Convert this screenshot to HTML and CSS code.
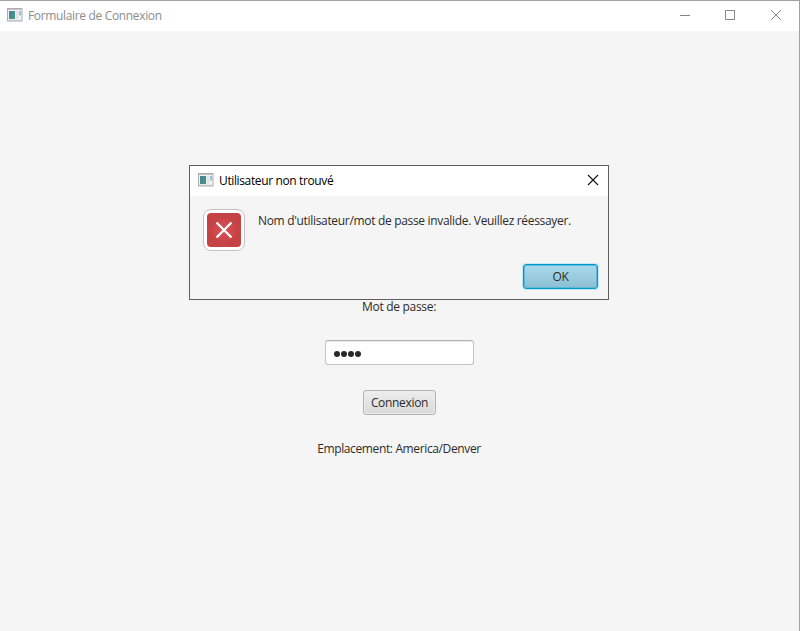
FILE: index.html
```html
<!DOCTYPE html>
<html lang="fr">
<head>
<meta charset="utf-8">
<title>Formulaire de Connexion</title>
<link rel="stylesheet" href="styles.css">
</head>
<body>
<svg width="0" height="0" class="defs">
  <defs>
    <linearGradient id="screen" x1="0" y1="0" x2="1" y2="1">
      <stop offset="0" stop-color="#4a7c9c"/><stop offset="1" stop-color="#3fa07c"/>
    </linearGradient>
    <symbol id="app" viewBox="0 0 16 14">
      <rect x=".5" y=".5" width="14.5" height="12.5" fill="#f5f4f7" stroke="#aeabb2"/>
      <path d="M1 1.5h14M1 12.3h14" stroke="#c3c1c8"/>
      <rect x="2" y="3" width="6" height="8" fill="url(#screen)"/>
      <rect x="8.5" y="3" width="3" height="8" fill="#e3e2e8"/>
      <rect x="12" y="3" width="2.3" height="2" fill="#9fbcf0"/>
      <rect x="12" y="5" width="2.3" height="2.5" fill="#9ccbb0"/>
    </symbol>
  </defs>
</svg>
<div class="window">
  <header class="titlebar">
    <svg class="app-icon" width="16" height="14"><use href="#app"/></svg>
    <span class="title t-main">Formulaire de Connexion</span>
    <div class="controls">
      <svg width="12" height="12" viewBox="0 0 12 12"><path d="M1 6.5h10" /></svg>
      <svg width="12" height="12" viewBox="0 0 12 12"><path d="M1.5 1.5h9v9h-9z"/></svg>
      <svg width="12" height="12" viewBox="0 0 12 12"><path d="M1 1l10 10M11 1L1 11"/></svg>
    </div>
  </header>
  <main class="form">
    <label class="label t-pass">Mot de passe:</label>
    <div class="field"><i></i><i></i><i></i><i></i></div>
    <button class="button"><span class="t-conn">Connexion</span></button>
    <div class="label t-loc">Emplacement: America/Denver</div>
  </main>
  <section class="dialog">
    <header class="dialog-bar">
      <svg class="app-icon" width="16" height="14"><use href="#app"/></svg>
      <span class="title t-dlg">Utilisateur non trouvé</span>
      <svg class="close" width="12" height="12" viewBox="0 0 12 12"><path d="M1 1l10 10M11 1L1 11"/></svg>
    </header>
    <div class="dialog-body">
      <div class="error">
        <svg width="18" height="18" viewBox="0 0 18 18"><path d="M1.5 1.5l15 15M16.5 1.5l-15 15"/></svg>
      </div>
      <p class="message t-msg">Nom d'utilisateur/mot de passe invalide. Veuillez réessayer.</p>
    </div>
    <div class="actions"><button class="button ok">OK</button></div>
  </section>
</div>
</body>
</html>
```
FILE: styles.css
```css
* { box-sizing: border-box; }
body { margin: 0; font: 12px/16px "Open Sans", "Noto Sans", sans-serif; color: #2b2b2b; }
.defs { position: absolute; }
.window { position: relative; width: 800px; height: 631px; background: #f5f5f5; border-top: 1px solid #a5a0a4; border-right: 1px solid #a5a0a4; overflow: hidden; }
.titlebar { display: flex; align-items: center; height: 30px; padding: 0 17px 0 7px; background: #fff; color: #8c8c8c; }
.app-icon { flex: none; margin-right: 5px; margin-bottom: 2px; }
.title, .label, .message, .button span { white-space: nowrap; }
.controls { display: flex; gap: 34px; margin: 0 0 2px auto; }
.controls svg { fill: none; stroke: #858585; }
.controls svg:nth-child(2) { margin-left: -1px; }
.form { display: flex; flex-direction: column; align-items: center; gap: 25px; padding: 268px 1px 0 0; }
.label { height: 16px; }
.field { display: flex; align-items: center; gap: 1.3px; width: 149px; height: 25px; margin-left: 1px; padding: 2px 7.5px 0; background: #fff; border: 1px solid #c3c3c3; border-top-color: #b0b0b0; border-radius: 3px; box-shadow: inset 0 1px 1px #e9e9e9; }
.field i { width: 6px; height: 6px; border-radius: 50%; background: #292929; }
.button { display: flex; align-items: center; justify-content: center; width: 73px; height: 25px; margin-left: 1px; padding: 0; font: inherit; color: #2b2b2b; border: 1px solid #b1b1b1; border-radius: 3px; background: linear-gradient(#eeeeee, #d9d9d9); box-shadow: inset 0 0 0 1px #ececec; }
.dialog { position: absolute; left: 189px; top: 164px; width: 420px; height: 135px; background: #f5f5f5; border: 1px solid #5f5f5f; }
.dialog-bar { display: flex; align-items: center; height: 30px; padding: 0 9px 0 8px; background: #fff; color: #000; }
.close { margin: 0 0 2px auto; stroke: #111; stroke-width: 1.1; }
.dialog-body { display: flex; gap: 13px; height: 68px; padding: 13px 0 0 13px; }
.error { position: relative; display: flex; align-items: center; justify-content: center; flex: none; width: 42px; height: 42px; border: 1px solid #c3c3c3; border-radius: 8px; background: #fff; }
.error::before { content: ""; position: absolute; inset: 3px; border-radius: 4px; background: radial-gradient(circle, #d74b51 0, #cf484c 40%, #c54345 50%); }
.error svg { position: relative; stroke: #fff; stroke-width: 2.3; }
.message { margin: 4px 0 0; }
.actions { display: flex; justify-content: flex-end; padding-right: 10px; }
.ok { width: 75px; height: 25px; border: 1px solid #0398c8; background: linear-gradient(#a9d9ec, #8dbfd3); box-shadow: 0 0 0 1px #c5e8f3, inset 0 0 0 1px #5cb9d8; letter-spacing: -.4px; }
.t-main { letter-spacing: -.34px; }
.t-dlg { letter-spacing: -.37px; }
.t-msg { letter-spacing: -.32px; }
.t-pass { letter-spacing: -.3px; }
.t-conn { letter-spacing: -.32px; }
.t-loc { letter-spacing: -.37px; margin-top: 1px; }
```
